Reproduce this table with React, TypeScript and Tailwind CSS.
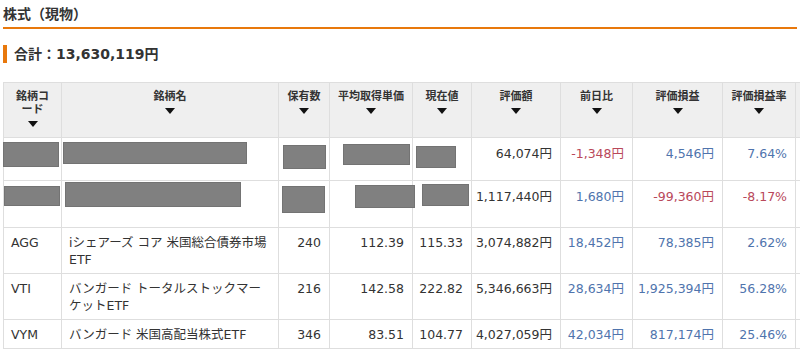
import React from 'react'

const FONT = { fontFamily: '"DejaVu Sans", Verdana, "Noto Sans CJK JP", sans-serif' }

type Cell = { text: string; color?: 'red' | 'blue' }
type Box = { l: number; t: number; w: number; h: number }

const cols = [58, 217, 51, 83, 59, 89, 72, 90, 73, 80]
const headers = ['銘柄コード', '銘柄名', '保有数', '平均取得単価', '現在値', '評価額', '前日比', '評価損益', '評価損益率', '']

const redacted: { h: number; boxes: (Box | null)[]; cells: Cell[] }[] = [
  {
    h: 43,
    boxes: [
      { l: -1, t: 4, w: 56, h: 25 },
      { l: 1, t: 4, w: 184, h: 22 },
      { l: 4, t: 7, w: 43, h: 24 },
      { l: 13, t: 6, w: 67, h: 21 },
      { l: 3, t: 8, w: 40, h: 22 },
    ],
    cells: [{ text: '64,074円' }, { text: '-1,348円', color: 'red' }, { text: '4,546円', color: 'blue' }, { text: '7.64%', color: 'blue' }],
  },
  {
    h: 47,
    boxes: [
      { l: 0, t: 5, w: 56, h: 20 },
      { l: 3, t: 1, w: 176, h: 25 },
      { l: 3, t: 5, w: 43, h: 27 },
      { l: 25, t: 4, w: 60, h: 23 },
      { l: 9, t: 3, w: 47, h: 22 },
    ],
    cells: [{ text: '1,117,440円' }, { text: '1,680円', color: 'blue' }, { text: '-99,360円', color: 'red' }, { text: '-8.17%', color: 'red' }],
  },
]

const rows = [
  { code: 'AGG', name: 'iシェアーズ コア 米国総合債券市場ETF', qty: '240', avg: '112.39', cur: '115.33', val: '3,074,882円', day: '18,452円', pl: '78,385円', rate: '2.62%' },
  { code: 'VTI', name: 'バンガード トータルストックマーケットETF', qty: '216', avg: '142.58', cur: '222.82', val: '5,346,663円', day: '28,634円', pl: '1,925,394円', rate: '56.28%' },
  { code: 'VYM', name: 'バンガード 米国高配当株式ETF', qty: '346', avg: '83.51', cur: '104.77', val: '4,027,059円', day: '42,034円', pl: '817,174円', rate: '25.46%' },
]

const colorClass = (c?: 'red' | 'blue') => (c === 'red' ? 'text-[#b9485a]' : c === 'blue' ? 'text-[#4f74ad]' : 'text-[#333]')

function SortArrow() {
  return (
    <svg width="10" height="6" viewBox="0 0 10 6" className="mx-auto mt-[5px] block">
      <path d="M0 0 H10 L5 6 Z" fill="#111" />
    </svg>
  )
}

export default function App() {
  const td = 'border border-[#dedede] align-top pt-[6px] pb-[5px] leading-[17px]'
  return (
    <div className="w-[800px] h-[357px] overflow-hidden bg-white text-[#333] px-[3px]" style={FONT}>
      <h2 className="pt-[4px] pb-[3px] text-[14px] leading-[20px] font-bold border-b-2 border-[#e8780c]">株式（現物）</h2>

      <div className="mt-[16px] border-l-4 border-[#e8780c] pl-[7px] text-[14px] leading-[18px] font-bold">合計：13,630,119円</div>

      <table className="mt-[19px] table-fixed border-collapse text-[12.5px]" style={{ width: cols.reduce((a, b) => a + b, 0) }}>
        <colgroup>
          {cols.map((w, i) => (
            <col key={i} style={{ width: w }} />
          ))}
        </colgroup>
        <thead>
          <tr>
            {headers.map((h, i) => (
              <th
                key={i}
                className={`h-[55px] border border-[#dedede] bg-[#efefef] align-top ${i === 0 ? 'px-[8px]' : 'px-[4px]'} pt-[7px] text-center text-[11px] leading-[13px] font-bold text-[#333]`}
              >
                {h}
                {h && <SortArrow />}
              </th>
            ))}
          </tr>
        </thead>
        <tbody>
          {redacted.map((r, ri) => (
            <tr key={ri}>
              {r.boxes.map((b, bi) => (
                <td key={bi} className="relative border border-[#dedede] p-0" style={{ height: r.h }}>
                  {b && (
                    <div
                      className="absolute bg-[#808080] border border-[#737373]"
                      style={{ left: b.l, top: b.t, width: b.w, height: b.h }}
                    />
                  )}
                </td>
              ))}
              {r.cells.map((c, ci) => (
                <td key={ci} className={`${td} text-right pr-[8px] ${colorClass(c.color)}`} style={{ paddingTop: 7 }}>
                  {c.text}
                </td>
              ))}
              <td className={td}></td>
            </tr>
          ))}
          {rows.map(r => (
            <tr key={r.code}>
              <td className={`${td} pl-[7px]`}>{r.code}</td>
              <td className={`${td} pl-[7px] pr-[9px]`}>{r.name}</td>
              <td className={`${td} text-right pr-[8px]`}>{r.qty}</td>
              <td className={`${td} text-right pr-[8px]`}>{r.avg}</td>
              <td className={`${td} text-right pr-[8px]`}>{r.cur}</td>
              <td className={`${td} text-right pr-[8px]`}>{r.val}</td>
              <td className={`${td} text-right pr-[8px] ${colorClass('blue')}`}>{r.day}</td>
              <td className={`${td} text-right pr-[8px] ${colorClass('blue')}`}>{r.pl}</td>
              <td className={`${td} text-right pr-[8px] ${colorClass('blue')}`}>{r.rate}</td>
              <td className={td}></td>
            </tr>
          ))}
        </tbody>
      </table>
    </div>
  )
}
